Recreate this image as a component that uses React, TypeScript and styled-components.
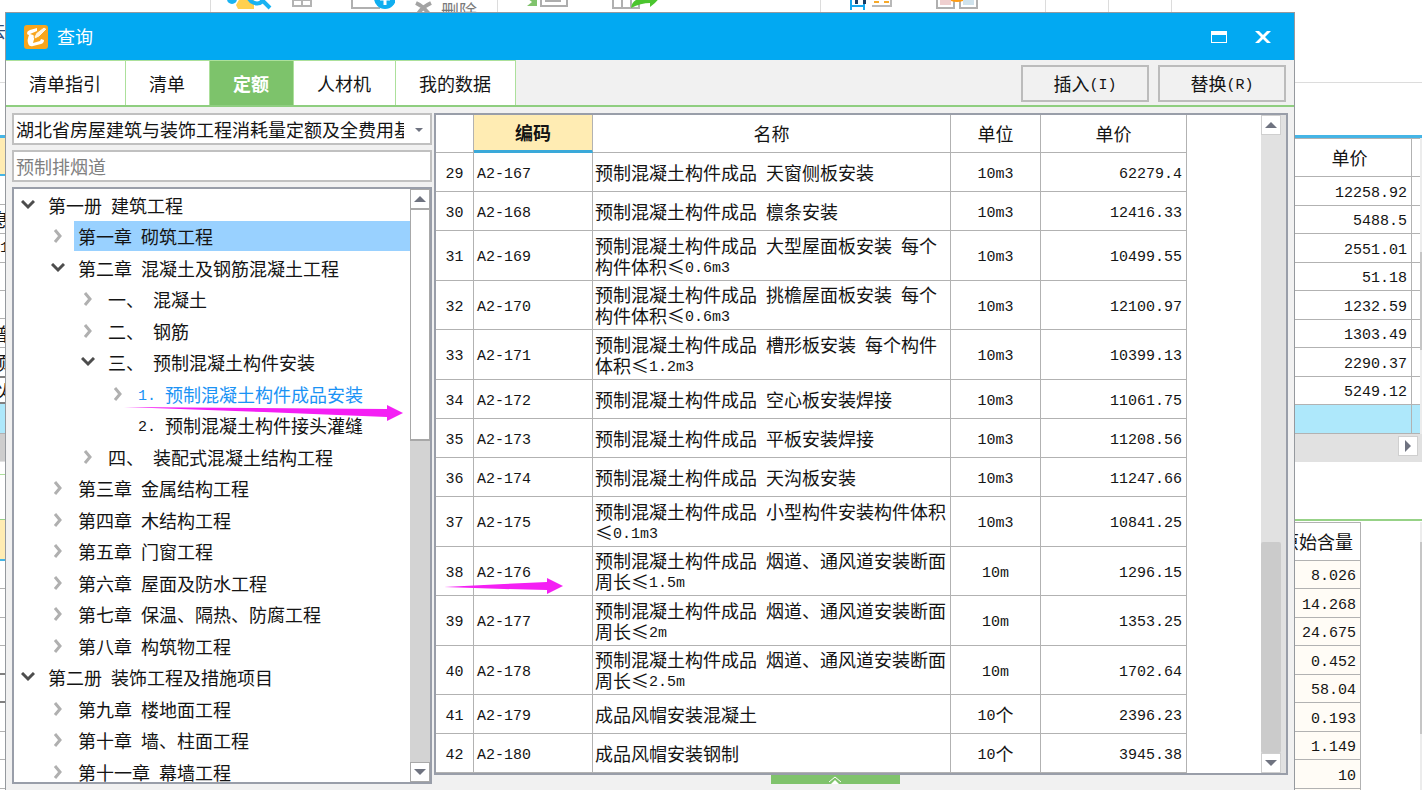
import React from "react";
import styled, { createGlobalStyle } from "styled-components";

const cjk = `"Noto Sans CJK SC", "Liberation Sans", sans-serif`;
const mono = `"Liberation Mono", "Noto Sans CJK SC", monospace`;
const line = "#b2b2b2";
const frame = "#999ea9";

const GlobalStyle = createGlobalStyle`
  * { box-sizing: border-box; }
  body { margin: 0; background: #fff; color: #141414; font: 18px/21px ${cjk}; }
  button, input, select { font: inherit; color: inherit; margin: 0; padding: 0; border: 0; background: none; border-radius: 0; }
  table { border-spacing: 0; border-collapse: separate; table-layout: fixed; }
  th { font-weight: 400; }
  th, td { padding: 0; }
  svg { display: block; flex: none; }
`;

/* Half-width runs are set in a monospaced face, half as wide as a CJK glyph. */
const Half = styled.span`
  font-family: ${mono};
  font-size: 15px;
  line-height: 1;
  vertical-align: 2px;
  white-space: pre-wrap;
`;

function Mixed({ children }: { children: string }) {
  return (
    <>
      {children.split(/([\x20-\x7e]+)/).map((part, i) =>
        i % 2 ? <Half key={i}>{part}</Half> : part,
      )}
    </>
  );
}

/* ---------- application behind the dialog ---------- */

const Page = styled.div`
  position: relative;
  height: 100vh;
  overflow: hidden;
  display: flex;
  flex-direction: column;
`;
const Ribbon = styled.div`
  height: 83px;
  flex: none;
  display: flex;
  align-items: flex-start;
  border-bottom: 1px solid #dcdcdc;
`;
const RibbonGroup = styled.div<{ $w: number }>`
  width: ${(p) => p.$w}px;
  height: 60px;
  flex: none;
  display: flex;
  align-items: flex-start;
  justify-content: space-between;
  padding: 0 20px 0 16px;
  border-right: 1px solid #dcdcdc;
`;
const RibbonStart = styled(RibbonGroup)`
  align-items: center;
  padding: 0;
  color: #35507a;
  text-indent: -12px;
  overflow: hidden;
`;
const RibbonButton = styled.button`
  display: flex;
  align-items: flex-start;
  gap: 9px;
  color: #7a7a7a;
`;
const Workspace = styled.div`
  flex: 1;
  display: flex;
  justify-content: space-between;
  align-items: flex-start;
`;
const Side = styled.div`
  width: 14px;
  padding-top: 52px;
`;
const SideRow = styled.div<{ $h: number; $bg?: string; $line?: string; $thick?: boolean }>`
  height: ${(p) => p.$h}px;
  display: flex;
  align-items: center;
  overflow: hidden;
  text-indent: -9px;
  background: ${(p) => p.$bg || "#fff"};
  border-bottom: ${(p) => (p.$thick ? 2 : 1)}px solid ${(p) => p.$line || line};
`;
const Right = styled.div`
  width: 148px;
  padding-top: 52px;
`;
const PriceBlock = styled.div`
  display: flex;
  border-top: 3px solid #45b5e6;
`;
const PriceTable = styled.table`
  margin-left: 14px;
  width: 132px;
  border-top: 1px solid ${line};
  th, td { height: 28px; border-right: 1px solid ${line}; border-bottom: 1px solid ${line}; }
  th { height: 38px; }
  tbody tr:nth-child(odd) td { height: 29px; }
  td { text-align: right; padding-right: 4px; }
  th + th, td + td { border-right: 0; }
`;
const BlankRow = styled.tr`
  background: #aee8fb;
`;
const HBar = styled.div`
  height: 28px;
  display: flex;
  justify-content: flex-end;
  align-items: flex-start;
  padding: 2px 4px 0 0;
  background: #e1e1e1;
`;
const QtyBlock = styled.div`
  display: flex;
  justify-content: space-between;
  margin-top: 57px;
  padding-top: 1px;
  border-top: 2px solid #97d287;
`;
const QtyTable = styled.table`
  width: 87px;
  border-top: 1px solid ${line};
  th, td { height: 28px; border-right: 1px solid ${line}; border-bottom: 1px solid ${line}; }
  th { height: 38px; }
  tbody tr:nth-child(even) td { height: 29px; }
  td { text-align: right; padding-right: 4px; background: #fffcf6; }
`;
const EdgeBar = styled.div<{ $start: number; $size: number }>`
  width: 2px;
  padding-top: ${(p) => p.$start}px;
  background: #ececec;
  &::before { content: ""; display: block; height: ${(p) => p.$size}px; background: #c6c6c6; }
`;

/* ---------- dialog ---------- */

const Dialog = styled.section`
  position: absolute;
  top: 12px;
  left: 5px;
  right: 127px;
  bottom: 0;
  display: flex;
  flex-direction: column;
  border: 1px solid #95999e;
  border-bottom: 0;
  background: #f1f1f1;
`;
const TitleBar = styled.header`
  height: 47px;
  flex: none;
  display: flex;
  align-items: center;
  gap: 9px;
  padding: 0 23px 0 18px;
  background: #02a9f2;
  color: #fff;
`;
const Title = styled.h1`
  flex: 1;
  margin: 0;
  font-size: 18px;
  font-weight: 400;
`;
const WindowButton = styled.button`
  width: 16px;
  height: 16px;
  display: flex;
  align-items: center;
  justify-content: center;
  & + & { margin-left: 19px; }
`;
const TabBar = styled.nav`
  height: 47px;
  flex: none;
  display: flex;
  border-bottom: 2px solid #8fce80;
`;
const Tab = styled.button<{ $active?: boolean }>`
  padding: 0 24px 0 23px;
  height: 45px;
  border-top: 1px solid #ace09b;
  border-right: 1px solid #ace09b;
  white-space: nowrap;
  background: ${(p) => (p.$active ? "#7dc36b" : "#fff")};
  color: ${(p) => (p.$active ? "#fff" : "#141414")};
  font-weight: ${(p) => (p.$active ? 700 : 400)};
`;
const Actions = styled.div`
  margin-left: auto;
  display: flex;
  gap: 9px;
  padding: 5px 8px 0 0;
`;
const ActionButton = styled.button`
  width: 128px;
  height: 37px;
  border: 2px solid #bcbcbc;
`;
const Body = styled.div`
  flex: 1;
  min-height: 0;
  display: flex;
  gap: 2px;
  padding: 6px;
`;
const LeftPane = styled.div`
  width: 420px;
  flex: none;
  display: flex;
  flex-direction: column;
  gap: 5px;
`;
const Field = styled.div`
  position: relative;
  height: 32px;
  flex: none;
  border: 2px solid #c0c0c0;
  background: #fff;
  svg { position: absolute; right: 6px; top: 12px; pointer-events: none; }
`;
const BookSelect = styled.select`
  display: block;
  width: 100%;
  height: 28px;
  padding: 0 26px 0 2px;
  appearance: none;
  outline: 0;
`;
const SearchInput = styled.input`
  display: block;
  width: 100%;
  height: 28px;
  padding: 0 2px;
  color: #808080;
  outline: 0;
`;
const TreePane = styled.div`
  flex: 1;
  min-height: 0;
  display: flex;
  border: 2px solid ${frame};
  background: #fff;
`;
const Tree = styled.ul`
  flex: 1;
  margin: 0;
  padding: 0;
  list-style: none;
  overflow: hidden;
`;
const TreeRow = styled.li<{ $level: number }>`
  height: 31px;
  display: flex;
  align-items: center;
  gap: 2px;
  padding-left: ${(p) => p.$level * 30}px;
  &:nth-child(even) { height: 32px; }
`;
const Toggle = styled.button`
  width: 28px;
  height: 28px;
  flex: none;
  display: flex;
  align-items: center;
  justify-content: center;
`;
const TreeLabel = styled.span<{ $selected?: boolean; $current?: boolean }>`
  flex: 1;
  padding-left: 4px;
  line-height: 30px;
  white-space: nowrap;
  background: ${(p) => (p.$selected ? "#99d1ff" : "transparent")};
  color: ${(p) => (p.$current ? "#1b93f5" : "inherit")};
`;
const TreeBar = styled.div`
  width: 20px;
  flex: none;
  display: flex;
  flex-direction: column;
  background: #d3d3d3;
`;
const StepButton = styled.button`
  width: 20px;
  height: 20px;
  flex: none;
  display: flex;
  align-items: center;
  justify-content: center;
  background: #fff;
  border: 1px solid #a8a8a8;
`;
const SoftStep = styled(StepButton)`
  border-color: #cfcfcf;
`;
const TreeThumb = styled.div`
  height: 232px;
  background: #fff;
  border: 1px solid #a8a8a8;
  border-bottom-width: 2px;
`;
const TreeTrack = styled.div`
  flex: 1;
`;
const RightPane = styled.div`
  flex: 1;
  min-width: 0;
  display: flex;
  flex-direction: column;
`;
const GridPane = styled.div`
  display: flex;
  border: 2px solid ${frame};
  background: #fff;
`;
const Grid = styled.table`
  flex: 1;
  min-width: 0;
  width: 100%;
  margin-right: 74px;
  th, td { height: 39px; border-right: 1px solid ${line}; border-bottom: 1px solid ${line}; }
  th { height: 38px; }
`;
const SortedTh = styled.th`
  background: #ffecb3;
  font-weight: 700;
  && { border-bottom: 3px solid #3aa9d9; }
`;
const Row = styled.tr<{ $tall: boolean }>`
  && td { height: ${(p) => (p.$tall ? 49 : 39)}px; }
  &&:nth-child(odd) td { height: ${(p) => (p.$tall ? 50 : 39)}px; }
`;
const Cell = styled.td<{ $align?: string }>`
  && { padding: 0 ${(p) => (p.$align === "center" ? 0 : 4)}px; text-align: ${(p) => p.$align || "left"}; }
`;
const CodeCell = styled.td`
  && { padding-left: 3px; }
`;
const NameCell = styled.td`
  && { padding-left: 2px; }
`;
const GridBar = styled.div`
  width: 25px;
  flex: none;
  display: flex;
  flex-direction: column;
  background: #e1e1e1;
`;
const GridTrack = styled.div`
  flex: 1;
`;
const GridThumb = styled.div`
  width: 20px;
  height: 211px;
  border-radius: 2px;
  background: #cbcbcb;
`;
const HandleRow = styled.div`
  display: flex;
  justify-content: center;
  padding-right: 52px;
`;
const Handle = styled.button`
  width: 129px;
  height: 9px;
  display: flex;
  justify-content: center;
  background: #80c36c;
`;
const Mark = styled.svg<{ $x: number; $y: number }>`
  position: absolute;
  left: ${(p) => p.$x}px;
  top: ${(p) => p.$y}px;
  fill: #f41ff4;
  pointer-events: none;
`;

type Dir = "up" | "down" | "right";
const triangles: Record<Dir, string> = { up: "M0 9 6 3l6 6z", down: "M0 3h12L6 9z", right: "M3 0l6 6-6 6z" };
function Triangle({ dir }: { dir: Dir }) {
  return (
    <svg width="12" height="12" viewBox="0 0 12 12"><path d={triangles[dir]} fill="#6f7380" /></svg>
  );
}
function Chevron({ open }: { open: boolean }) {
  return open ? (
    <svg width="14" height="10" viewBox="0 0 14 10"><path d="M1 1l6 6 6-6" fill="none" stroke="#4d4d4d" strokeWidth="3" /></svg>
  ) : (
    <svg width="10" height="14" viewBox="0 0 10 14"><path d="M2 1l5 6-5 6" fill="none" stroke="#b0b0b0" strokeWidth="3" /></svg>
  );
}

type Node = [level: number, label: string, state: "open" | "closed" | "leaf"];
const nodes: Node[] = [
  [0, "第一册 建筑工程", "open"],
  [1, "第一章 砌筑工程", "closed"],
  [1, "第二章 混凝土及钢筋混凝土工程", "open"],
  [2, "一、 混凝土", "closed"],
  [2, "二、 钢筋", "closed"],
  [2, "三、 预制混凝土构件安装", "open"],
  [3, "1. 预制混凝土构件成品安装", "closed"],
  [3, "2. 预制混凝土构件接头灌缝", "leaf"],
  [2, "四、 装配式混凝土结构工程", "closed"],
  [1, "第三章 金属结构工程", "closed"],
  [1, "第四章 木结构工程", "closed"],
  [1, "第五章 门窗工程", "closed"],
  [1, "第六章 屋面及防水工程", "closed"],
  [1, "第七章 保温、隔热、防腐工程", "closed"],
  [1, "第八章 构筑物工程", "closed"],
  [0, "第二册 装饰工程及措施项目", "open"],
  [1, "第九章 楼地面工程", "closed"],
  [1, "第十章 墙、柱面工程", "closed"],
  [1, "第十一章 幕墙工程", "closed"],
];

type Item = [no: string, code: string, name: string, unit: string, price: string];
const items: Item[] = [
  ["29", "A2-167", "预制混凝土构件成品 天窗侧板安装", "10m3", "62279.4"],
  ["30", "A2-168", "预制混凝土构件成品 檩条安装", "10m3", "12416.33"],
  ["31", "A2-169", "预制混凝土构件成品 大型屋面板安装 每个构件体积≤0.6m3", "10m3", "10499.55"],
  ["32", "A2-170", "预制混凝土构件成品 挑檐屋面板安装 每个构件体积≤0.6m3", "10m3", "12100.97"],
  ["33", "A2-171", "预制混凝土构件成品 槽形板安装 每个构件体积≤1.2m3", "10m3", "10399.13"],
  ["34", "A2-172", "预制混凝土构件成品 空心板安装焊接", "10m3", "11061.75"],
  ["35", "A2-173", "预制混凝土构件成品 平板安装焊接", "10m3", "11208.56"],
  ["36", "A2-174", "预制混凝土构件成品 天沟板安装", "10m3", "11247.66"],
  ["37", "A2-175", "预制混凝土构件成品 小型构件安装构件体积≤0.1m3", "10m3", "10841.25"],
  ["38", "A2-176", "预制混凝土构件成品 烟道、通风道安装断面周长≤1.5m", "10m", "1296.15"],
  ["39", "A2-177", "预制混凝土构件成品 烟道、通风道安装断面周长≤2m", "10m", "1353.25"],
  ["40", "A2-178", "预制混凝土构件成品 烟道、通风道安装断面周长≤2.5m", "10m", "1702.64"],
  ["41", "A2-179", "成品风帽安装混凝土", "10个", "2396.23"],
  ["42", "A2-180", "成品风帽安装钢制", "10个", "3945.38"],
];

const prices = ["12258.92", "5488.5", "2551.01", "51.18", "1232.59", "1303.49", "2290.37", "5249.12"];
const quantities = ["8.026", "14.268", "24.675", "0.452", "58.04", "0.193", "1.149", "10", ""];

function Background() {
  return (
    <>
      <Ribbon>
        <RibbonStart $w={211}>去</RibbonStart>
        <RibbonGroup $w={287}>
          <svg width="46" height="12" viewBox="0 0 46 12">
            <circle cx="5" cy="-1" r="5" fill="#19b3f2" />
            <path d="M9 5l4-7h14v11H11z" fill="#ffd04f" />
            <path d="M21-5a9 9 0 0 0 15 6M34-1l9 9" fill="none" stroke="#19b3f2" strokeWidth="4" />
          </svg>
          <svg width="38" height="12" viewBox="0 0 38 12">
            <path d="M1-3v9h18v-9M10-3v9M1 0h18" fill="none" stroke="#b3b3b3" strokeWidth="2" />
          </svg>
          <svg width="46" height="12" viewBox="0 0 46 12">
            <path d="M3-3V8h28" fill="none" stroke="#b0b0b0" strokeWidth="2" />
            <circle cx="36" cy="-2" r="11" fill="#10aef0" />
            <path d="M36-6V5M31-1h10" stroke="#fff" strokeWidth="3" />
          </svg>
          <RibbonButton>
            <svg width="18" height="12" viewBox="0 0 18 12">
              <path d="M2 3q7 3 13 11M17 3Q8 7 4 14" fill="none" stroke="#a3a3a3" strokeWidth="4" />
            </svg>
            删除
          </RibbonButton>
        </RibbonGroup>
        <RibbonGroup $w={323}>
          <svg width="54" height="12" viewBox="0 0 54 12">
            <path d="M13-2h10v8H13l5-4z" fill="#80c36c" />
            <path d="M27-2v8h26v-8M31 1h16" fill="none" stroke="#adadad" strokeWidth="2" />
          </svg>
          <svg width="212" height="12" viewBox="0 0 212 12">
            <path d="M25-2V8h26V-2M34-2V8M43-2V8" fill="none" stroke="#b0b0b0" strokeWidth="2" />
            <path d="M43 8q1-9 12-10h16q-2 4-9 9v-4q-9 0-19 5z" fill="#4bc52f" />
          </svg>
        </RibbonGroup>
        <RibbonGroup $w={225}>
          <svg width="60" height="12" viewBox="0 0 60 12">
            <path d="M14-2v12M27-2v12M14 6h13" fill="none" stroke="#17a8ee" strokeWidth="2" />
            <path d="M18-1h3v5h-3zM26-1h3v5h-3z" fill="#173d67" />
            <path d="M35 6h19v-8" fill="none" stroke="#b8b8b8" strokeWidth="2" />
            <path d="M37 2h5M47 2h5" stroke="#f7a928" strokeWidth="2" />
          </svg>
          <svg width="108" height="12" viewBox="0 0 108 12">
            <path d="M20-2V8h17V-2M43-2V8h17V-2" fill="none" stroke="#b0b0b0" strokeWidth="2" />
            <path d="M23-2h11v7H23z" fill="#efcfcf" /><path d="M46-2h11v7H46z" fill="#cfe2ec" />
            <path d="M34-2h12v3q-6 2-12 0z" fill="#ff9b12" />
          </svg>
        </RibbonGroup>
        <RibbonGroup $w={63} />
        <RibbonGroup $w={63} />
      </Ribbon>
      <Workspace>
        <Side>
          <SideRow $h={3} $bg="#45b5e6" $line="#45b5e6" />
          <SideRow $h={38} $bg="#ffecb3" $thick $line="#45b5e6" />
          <SideRow $h={29} />
          <SideRow $h={29}>息</SideRow>
          <SideRow $h={29}><Half>&nbsp;1</Half></SideRow>
          <SideRow $h={28} />
          <SideRow $h={28} />
          <SideRow $h={29}>普</SideRow>
          <SideRow $h={30} $thick $line="#808080">预</SideRow>
          <SideRow $h={26} $thick $line="#808080">以</SideRow>
          <SideRow $h={30} $bg="#aee8fb" />
          <SideRow $h={28} $bg="#cdcdcd" $line="#e1e1e1" />
          <SideRow $h={13} $line="#ace09b" />
          <SideRow $h={45} $line="#97d287" />
          <SideRow $h={41} $bg="#ffecb3" $thick $line="#45b5e6" />
          <SideRow $h={28} />
          <SideRow $h={29} />
          <SideRow $h={28} />
          <SideRow $h={29} $thick $line="#808080" />
          <SideRow $h={28} $thick $line="#808080" />
          <SideRow $h={29} />
          <SideRow $h={28} />
          <SideRow $h={29} />
        </Side>
        <Right>
          <PriceBlock>
            <PriceTable>
              <colgroup><col width="124" /><col /></colgroup>
              <thead><tr><th>单价</th><th /></tr></thead>
              <tbody>
                {prices.map((p) => <tr key={p}><td><Mixed>{p}</Mixed></td><td /></tr>)}
                <BlankRow><td /><td /></BlankRow>
              </tbody>
            </PriceTable>
            <EdgeBar $start={114} $size={98} />
          </PriceBlock>
          <HBar><SoftStep aria-label="向右滚动"><Triangle dir="right" /></SoftStep></HBar>
          <QtyBlock>
            <QtyTable>
              <thead><tr><th>原始含量</th></tr></thead>
              <tbody>
                {quantities.map((q) => <tr key={q}><td><Mixed>{q}</Mixed></td></tr>)}
              </tbody>
            </QtyTable>
            <EdgeBar $start={20} $size={192} />
          </QtyBlock>
        </Right>
      </Workspace>
    </>
  );
}

export default function App() {
  return (
    <Page>
      <GlobalStyle />
      <Background />
      <Dialog role="dialog" aria-labelledby="dialog-title">
        <TitleBar>
          <svg width="24" height="24" viewBox="0 0 24 24">
            <rect width="24" height="24" rx="3" fill="#f8a51c" />
            <path d="M13 3L6 5q-3 1-3 3 0 2 2 2-2 5-1 8 1 4 5 3l8-2q3-1 3-4l-3-1-1 2-7 2q1-4 2-6l-2-2-3-1 7-3z" fill="#fff" />
            <path d="M10 12l2-4 8-6 3 2-8 8-4 2z" fill="#fff4e0" stroke="#f8a51c" />
          </svg>
          <Title id="dialog-title">查询</Title>
          <WindowButton aria-label="最大化">
            <svg width="16" height="12" viewBox="0 0 16 12"><path d="M0 0h16v12H0zM1 4v7h14V4z" fill="#fff" fillRule="evenodd" /></svg>
          </WindowButton>
          <WindowButton aria-label="关闭">
            <svg width="16" height="12" viewBox="0 0 16 12"><path d="M0 0h4l4 4 4-4h4l-6 6 6 6h-4l-4-4-4 4H0l6-6z" fill="#fff" /></svg>
          </WindowButton>
        </TitleBar>
        <TabBar>
          <Tab>清单指引</Tab>
          <Tab>清单</Tab>
          <Tab $active>定额</Tab>
          <Tab>人材机</Tab>
          <Tab>我的数据</Tab>
          <Actions>
            <ActionButton><Mixed>插入(I)</Mixed></ActionButton>
            <ActionButton><Mixed>替换(R)</Mixed></ActionButton>
          </Actions>
        </TabBar>
        <Body>
          <LeftPane>
            <Field>
              <BookSelect aria-label="定额库">
                <option>湖北省房屋建筑与装饰工程消耗量定额及全费用基价表</option>
              </BookSelect>
              <svg width="10" height="6" viewBox="0 0 10 6"><path d="M1 1h8L5 5z" fill="#6f7380" /></svg>
            </Field>
            <Field>
              <SearchInput aria-label="搜索" defaultValue="预制排烟道" />
            </Field>
            <TreePane>
              <Tree>
                {nodes.map(([level, label, state], i) => (
                  <TreeRow key={label} $level={level}>
                    <Toggle aria-label="展开或折叠" disabled={state === "leaf"}>
                      {state !== "leaf" && <Chevron open={state === "open"} />}
                    </Toggle>
                    <TreeLabel $selected={i === 1} $current={i === 6}><Mixed>{label}</Mixed></TreeLabel>
                  </TreeRow>
                ))}
              </Tree>
              <TreeBar>
                <StepButton aria-label="向上滚动"><Triangle dir="up" /></StepButton>
                <TreeThumb />
                <TreeTrack />
                <StepButton aria-label="向下滚动"><Triangle dir="down" /></StepButton>
              </TreeBar>
            </TreePane>
          </LeftPane>
          <RightPane>
            <GridPane>
              <Grid>
                <colgroup>
                  <col width="38" /><col width="119" /><col /><col width="90" /><col width="146" />
                </colgroup>
                <thead>
                  <tr><th /><SortedTh>编码</SortedTh><th>名称</th><th>单位</th><th>单价</th></tr>
                </thead>
                <tbody>
                  {items.map(([no, code, name, unit, price]) => (
                    <Row key={no} $tall={name.includes("≤")}>
                      <Cell $align="center"><Mixed>{no}</Mixed></Cell>
                      <CodeCell><Mixed>{code}</Mixed></CodeCell>
                      <NameCell><Mixed>{name}</Mixed></NameCell>
                      <Cell $align="center"><Mixed>{unit}</Mixed></Cell>
                      <Cell $align="right"><Mixed>{price}</Mixed></Cell>
                    </Row>
                  ))}
                </tbody>
              </Grid>
              <GridBar>
                <SoftStep aria-label="向上滚动"><Triangle dir="up" /></SoftStep>
                <GridTrack />
                <GridThumb />
                <SoftStep aria-label="向下滚动"><Triangle dir="down" /></SoftStep>
              </GridBar>
            </GridPane>
            <HandleRow>
              <Handle aria-label="展开">
                <svg width="14" height="9" viewBox="0 0 14 9">
                  <path d="M1 7l6-5 6 5" fill="none" stroke="#fff" strokeWidth="1" />
                  <path d="M3 9l4-4 4 4z" fill="#fff" />
                </svg>
              </Handle>
            </HandleRow>
          </RightPane>
        </Body>
        <Mark $x={118} $y={392} width="279" height="16" viewBox="0 0 279 16">
          <path d="M0 2l263 2V0l16 8-16 8v-4L140 7z" />
        </Mark>
        <Mark $x={438} $y={565} width="119" height="16" viewBox="0 0 119 16">
          <path d="M0 9l60-3 43-2V0l16 8-16 8v-4l-43-1z" />
        </Mark>
      </Dialog>
    </Page>
  );
}
